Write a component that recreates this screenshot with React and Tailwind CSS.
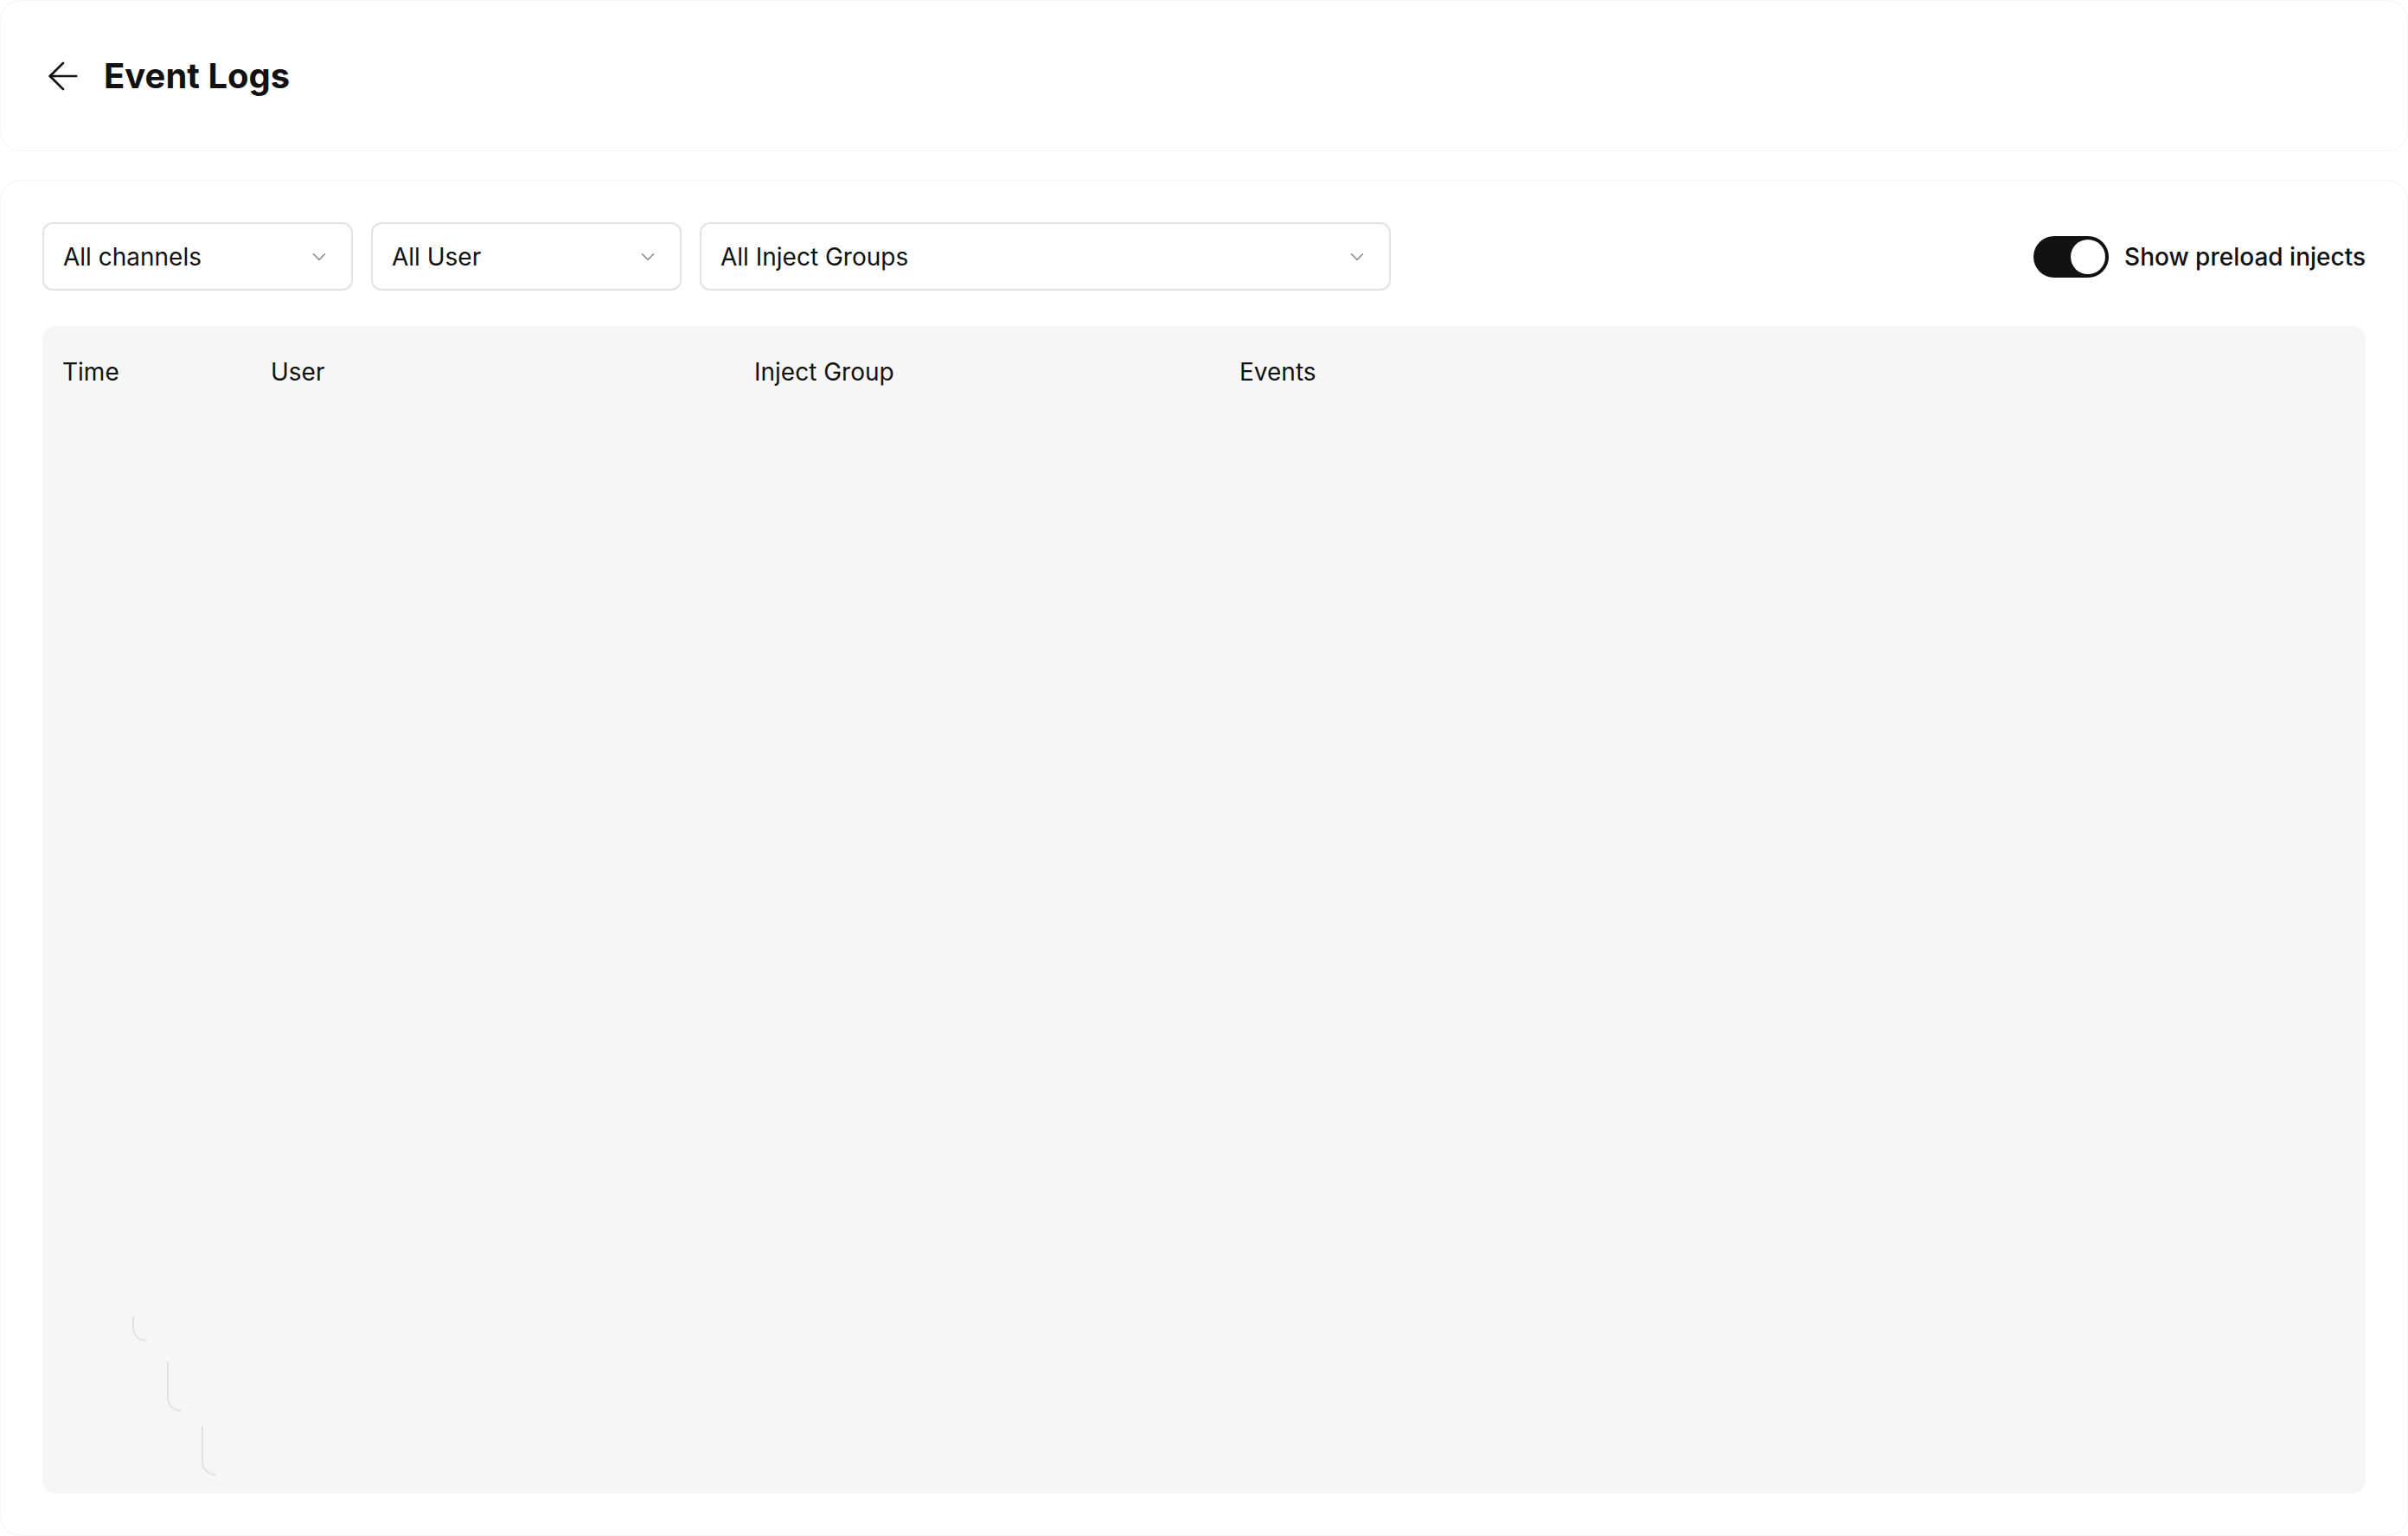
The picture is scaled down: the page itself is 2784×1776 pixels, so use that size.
import React, { useState } from 'react';
import { ArrowLeft, ChevronDown } from 'lucide-react';

const columns = [
  { key: 'time', label: 'Time', width: 'w-[241px]' },
  { key: 'user', label: 'User', width: 'w-[559px]' },
  { key: 'group', label: 'Inject Group', width: 'w-[561px]' },
  { key: 'events', label: 'Events', width: 'flex-1' },
];

function FilterSelect({ label, width }) {
  return (
    <button
      type="button"
      className={`${width} h-[79px] flex items-center justify-between pl-[22px] pr-[24px] bg-white border-2 border-[#e3e3e3] rounded-[12px] text-[28px] text-[#111111]`}
    >
      <span>{label}</span>
      <ChevronDown size={26} strokeWidth={1.5} className="text-[#8a8a8a]" />
    </button>
  );
}

function Toggle({ checked, onChange }) {
  return (
    <button
      type="button"
      onClick={() => onChange(!checked)}
      className={`w-[87px] h-[48px] rounded-full flex items-center px-[4px] ${
        checked ? 'bg-[#111111] justify-end' : 'bg-[#d4d4d4] justify-start'
      }`}
    >
      <span className="block w-[40px] h-[40px] rounded-full bg-white" />
    </button>
  );
}

function Connector({ className }) {
  return (
    <div
      className={`w-[16px] border-l-2 border-b-2 border-[#e2e2e2] rounded-bl-[16px] ${className}`}
    />
  );
}

export default function App() {
  const [showPreload, setShowPreload] = useState(true);

  return (
    <div className="h-screen overflow-hidden bg-white flex flex-col gap-[33px] font-['Inter',sans-serif] text-[#111111]">
      <div className="h-[175px] shrink-0 flex items-center gap-[21px] px-[46px] bg-white border border-[#f5f5f5] rounded-[24px]">
        <button type="button" className="text-[#111111]">
          <ArrowLeft size={52} strokeWidth={1.25} />
        </button>
        <h1 className="text-[40px] font-bold">Event Logs</h1>
      </div>

      <div className="flex-1 min-h-0 flex flex-col p-[48px] bg-white border border-[#f5f5f5] rounded-[24px]">
        <div className="flex items-center gap-[21px]">
          <FilterSelect label="All channels" width="w-[359px]" />
          <FilterSelect label="All User" width="w-[359px]" />
          <FilterSelect label="All Inject Groups" width="w-[799px]" />
          <div className="ml-auto flex items-center gap-[18px]">
            <Toggle checked={showPreload} onChange={setShowPreload} />
            <span className="text-[28px] font-medium">Show preload injects</span>
          </div>
        </div>

        <div className="mt-[41px] flex-1 flex flex-col bg-[#f6f6f6] rounded-[16px]">
          <div className="h-[106px] flex items-center pl-[23px] text-[28px]">
            {columns.map((col) => (
              <div key={col.key} className={col.width}>
                {col.label}
              </div>
            ))}
          </div>

          <div className="mt-auto pb-[21px] flex flex-col">
            <Connector className="ml-[104px] h-[29px]" />
            <Connector className="ml-[144px] mt-[24px] h-[57px]" />
            <Connector className="ml-[184px] mt-[17px] h-[57px]" />
          </div>
        </div>
      </div>
    </div>
  );
}
